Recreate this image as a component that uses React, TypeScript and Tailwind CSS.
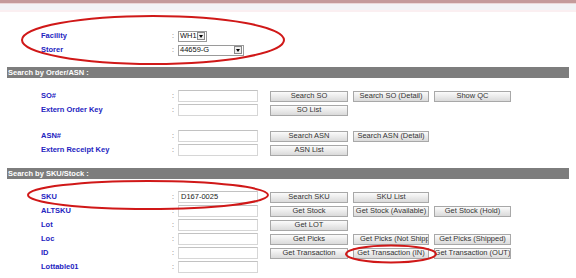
import React from 'react';

const Btn = ({ label, w }: { label: string; w: string }) => {
  const clipped = label === 'Get Picks (Not Shipped)';
  return (
    <div
      className={`${w} h-[11px] flex items-center ${clipped ? 'justify-start pl-[6px]' : 'justify-center'} whitespace-nowrap overflow-hidden border border-[#a8a8a8] bg-gradient-to-b from-[#fbfbfb] to-[#dadada] text-[7.5px] leading-none text-[#333]`}
    >
      {label}
    </div>
  );
};

const Field = ({ value }: { value?: string }) => (
  <div className="w-[80px] h-[12px] border border-[#d6d6d6] border-t-[#c2c2c2] bg-white flex items-center px-[2px] text-[7.5px] text-[#222]">
    {value}
  </div>
);

type Row = { label: string; value?: string; buttons?: string[] };

const widths = ['w-[78px]', 'w-[76px]', 'w-[77px]'];

const Label = ({ text }: { text: string }) => (
  <>
    <div className="w-[172px] pl-[41px] font-bold text-[7.5px] text-[#2323bf] whitespace-nowrap">{text}</div>
    <div className="w-[6px] text-[7px] text-[#666]">:</div>
  </>
);

const FormRow = ({ row }: { row: Row }) => (
  <div className="flex items-center h-[14px]">
    <Label text={row.label} />
    <Field value={row.value} />
    <div className="ml-[12px] flex gap-x-[5px]">
      {(row.buttons ?? []).map((b, i) => (
        <Btn key={b} label={b} w={widths[i]} />
      ))}
    </div>
  </div>
);

const SectionBar = ({ title }: { title: string }) => (
  <div className="mx-[7px] h-[11px] bg-[#7d7d7d] flex items-center pl-[1px] text-[7.5px] font-bold text-white">
    {title}
  </div>
);

const Select = ({ value, w }: { value: string; w: string }) => (
  <div className={`${w} h-[11px] border border-[#9a9a9a] bg-white flex items-center justify-between text-[7.5px] text-[#111]`}>
    <span className="pl-[1px]">{value}</span>
    <span className="w-[8px] h-[8px] mr-[1px] border border-[#888] bg-[#eee] flex items-center justify-center">
      <span className="w-0 h-0 border-l-[2px] border-r-[2px] border-t-[3px] border-l-transparent border-r-transparent border-t-black" />
    </span>
  </div>
);

export default function App() {
  const orderRows: Row[] = [
    { label: 'SO#', buttons: ['Search SO', 'Search SO (Detail)', 'Show QC'] },
    { label: 'Extern Order Key', buttons: ['SO List'] },
  ];
  const asnRows: Row[] = [
    { label: 'ASN#', buttons: ['Search ASN', 'Search ASN (Detail)'] },
    { label: 'Extern Receipt Key', buttons: ['ASN List'] },
  ];
  const skuRows: Row[] = [
    { label: 'SKU', value: 'D167-0025', buttons: ['Search SKU', 'SKU List'] },
    { label: 'ALTSKU', buttons: ['Get Stock', 'Get Stock (Available)', 'Get Stock (Hold)'] },
    { label: 'Lot', buttons: ['Get LOT'] },
    { label: 'Loc', buttons: ['Get Picks', 'Get Picks (Not Shipped)', 'Get Picks (Shipped)'] },
    { label: 'ID', buttons: ['Get Transaction', 'Get Transaction (IN)', 'Get Transaction (OUT)'] },
    { label: 'Lottable01' },
  ];

  return (
    <div className="relative w-[576px] h-[278px] overflow-hidden bg-white font-['Liberation_Sans',Arial,sans-serif]">
      <div className="h-[3px] bg-[#c49b9b]" />
      <div className="h-[1px] bg-[#ead8d8]" />
      <div className="h-[6px] bg-[#f2f4f6]" />
      <div className="h-[2px] bg-[#fbeff1]" />

      <div className="pt-[17px]">
        <div className="flex items-center h-[14px]">
          <Label text="Facility" />
          <Select value="WH1" w="w-[29px]" />
        </div>
        <div className="flex items-center h-[14px]">
          <Label text="Storer" />
          <Select value="44659-G" w="w-[66px]" />
        </div>
      </div>

      <div className="mt-[10px]">
        <SectionBar title="Search by Order/ASN :" />
      </div>
      <div className="mt-[11px]">
        {orderRows.map((r) => (
          <FormRow key={r.label} row={r} />
        ))}
      </div>
      <div className="mt-[12px]">
        {asnRows.map((r) => (
          <FormRow key={r.label} row={r} />
        ))}
      </div>

      <div className="mt-[11px]">
        <SectionBar title="Search by SKU/Stock :" />
      </div>
      <div className="mt-[11px]">
        {skuRows.map((r) => (
          <FormRow key={r.label} row={r} />
        ))}
      </div>

      <svg className="absolute inset-0 pointer-events-none" width="576" height="278">
        <ellipse cx="153" cy="40" rx="131" ry="24" fill="none" stroke="#d01818" strokeWidth="2" />
        <ellipse cx="148" cy="195" rx="120" ry="14" fill="none" stroke="#d01818" strokeWidth="2" />
        <ellipse cx="391" cy="254" rx="45" ry="8.5" fill="none" stroke="#d01818" strokeWidth="2" />
      </svg>
    </div>
  );
}
